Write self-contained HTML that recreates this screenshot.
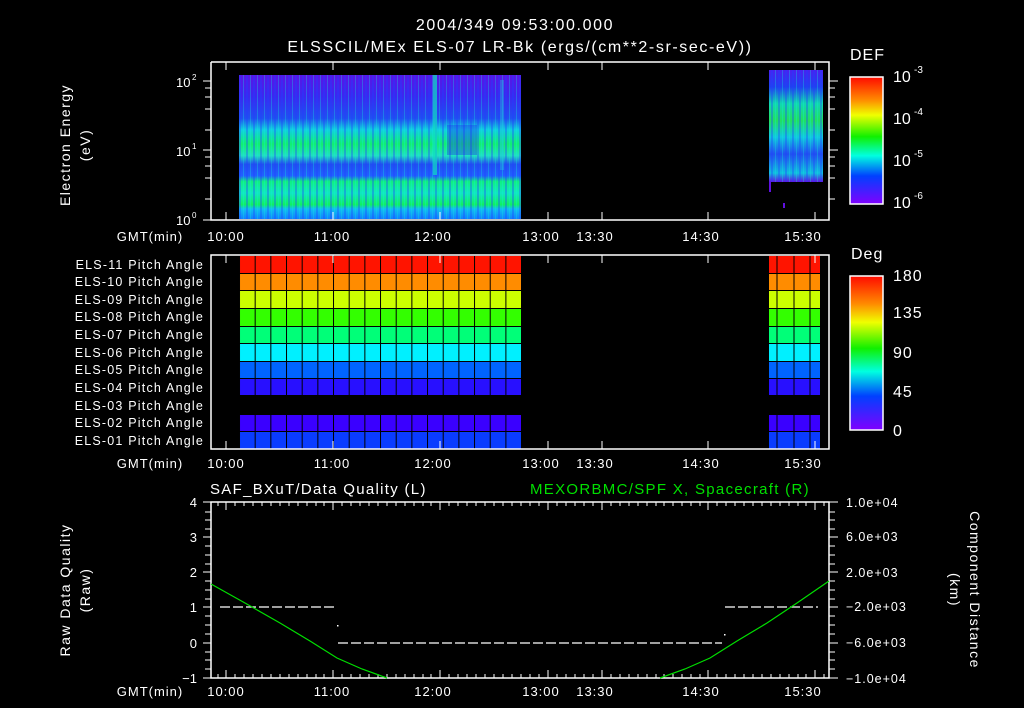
<!DOCTYPE html>
<html><head><style>
html,body{margin:0;padding:0;background:#000;width:1024px;height:708px;overflow:hidden}
svg{display:block}
text{font-family:"Liberation Sans",sans-serif;fill:#fff}
</style></head><body>
<svg width="1024" height="708" viewBox="0 0 1024 708">
<defs>
<linearGradient id="rb" x1="0" y1="0" x2="0" y2="1">
<stop offset="0" stop-color="#ff0a00"/>
<stop offset="0.18" stop-color="#ff8a00"/>
<stop offset="0.3" stop-color="#f0ff00"/>
<stop offset="0.47" stop-color="#10f000"/>
<stop offset="0.62" stop-color="#00ffe0"/>
<stop offset="0.78" stop-color="#0040ff"/>
<stop offset="1" stop-color="#8000ff"/>
</linearGradient>
<linearGradient id="sp" x1="0" y1="0" x2="0" y2="1">
<stop offset="0" stop-color="#5a14e6"/>
<stop offset="0.15" stop-color="#3a28f0"/>
<stop offset="0.3" stop-color="#2050f0"/>
<stop offset="0.38" stop-color="#10d0e0"/>
<stop offset="0.48" stop-color="#10f070"/>
<stop offset="0.56" stop-color="#20e0c0"/>
<stop offset="0.62" stop-color="#2050f0"/>
<stop offset="0.7" stop-color="#2060ff"/>
<stop offset="0.74" stop-color="#10f080"/>
<stop offset="0.82" stop-color="#10e8c0"/>
<stop offset="0.9" stop-color="#10f060"/>
<stop offset="0.93" stop-color="#10c0f0"/>
<stop offset="1" stop-color="#1080ff"/>
</linearGradient>
<linearGradient id="sp2" x1="0" y1="0" x2="0" y2="1">
<stop offset="0" stop-color="#4a20f0"/>
<stop offset="0.15" stop-color="#2040f0"/>
<stop offset="0.3" stop-color="#10d8b0"/>
<stop offset="0.45" stop-color="#20e060"/>
<stop offset="0.6" stop-color="#10c8e0"/>
<stop offset="0.75" stop-color="#2050f0"/>
<stop offset="0.92" stop-color="#10c0e0"/>
<stop offset="1" stop-color="#6010e0"/>
</linearGradient>
<pattern id="cols" x="239" y="0" width="15.67" height="10" patternUnits="userSpaceOnUse">
<rect x="0" y="0" width="1" height="10" fill="#000"/>
</pattern>
<pattern id="streak" x="239" y="0" width="7" height="10" patternUnits="userSpaceOnUse">
<rect x="0" y="0" width="2" height="10" fill="#2040ff" opacity="0.35"/>
<rect x="4" y="0" width="1" height="10" fill="#10f0e0" opacity="0.3"/>
</pattern>
</defs>

<g letter-spacing="1.6">
<text x="515" y="30" font-size="16" text-anchor="middle">2004/349 09:53:00.000</text>
<text x="520" y="52" font-size="16" text-anchor="middle">ELSSCIL/MEx ELS-07 LR-Bk  (ergs/(cm**2-sr-sec-eV))</text>
</g>

<!-- top panel -->
<rect x="239" y="75" width="282" height="144" fill="url(#sp)"/>
<rect x="239" y="75" width="282" height="144" fill="url(#streak)"/>
<rect x="433" y="75" width="4" height="100" fill="#10e0c0" opacity="0.7"/>
<rect x="500" y="80" width="4" height="90" fill="#20c0e0" opacity="0.4"/>
<rect x="447" y="125" width="30" height="30" fill="#2020f0" opacity="0.35"/>
<rect x="769" y="70" width="54" height="112" fill="url(#sp2)"/>
<rect x="769" y="70" width="54" height="112" fill="url(#streak)"/>
<rect x="769" y="182" width="2" height="10" fill="#6010e0"/>
<rect x="783" y="203" width="2" height="5" fill="#6010e0"/>
<g stroke="#fff" stroke-width="1.5" fill="none">
<path d="M211 62V220H829V62H211"/>
</g>
<g stroke="#fff" stroke-width="1">
<path d="M203 81H211M205 88H211M205 97H211M205 109H211M205 130H211M203 150H211M205 157H211M205 166H211M205 178H211M205 199H211M203 220H211"/>
<path d="M829 81H838M829 88H835M829 97H835M829 109H835M829 130H835M829 150H838M829 157H835M829 166H835M829 178H835M829 199H835"/>
<path d="M226 62v8M333 62v8M440 62v8M548 62v8M602 62v8M708 62v8M815 62v8M226 220v-8M333 220v-8M440 220v-8M548 220v-8M602 220v-8M708 220v-8M815 220v-8"/>
</g>
<text x="176" y="87" font-size="13">10</text><text x="192" y="80" font-size="8">2</text>
<text x="176" y="156" font-size="13">10</text><text x="192" y="149" font-size="8">1</text>
<text x="176" y="225" font-size="13">10</text><text x="192" y="218" font-size="8">0</text>
<g letter-spacing="1.5">
<text transform="translate(70,145) rotate(-90)" font-size="14" text-anchor="middle">Electron Energy</text>
<text transform="translate(90,145) rotate(-90)" font-size="14" text-anchor="middle">(eV)</text>
</g>

<!-- colorbar DEF -->
<text x="850" y="60" font-size="16" letter-spacing="1">DEF</text>
<rect x="850" y="77" width="33" height="127" fill="url(#rb)" stroke="#fff" stroke-width="1.5"/>
<text x="893" y="82" font-size="16">10</text><text x="914" y="73" font-size="10">-3</text>
<text x="893" y="124" font-size="16">10</text><text x="914" y="115" font-size="10">-4</text>
<text x="893" y="166" font-size="16">10</text><text x="914" y="157" font-size="10">-5</text>
<text x="893" y="208" font-size="16">10</text><text x="914" y="199" font-size="10">-6</text>

<!-- time labels -->
<g font-size="13" text-anchor="middle" letter-spacing="1">
<text x="150" y="241">GMT(min)</text>
<text x="226" y="241">10:00</text><text x="332" y="241">11:00</text><text x="433" y="241">12:00</text><text x="541" y="241">13:00</text><text x="595" y="241">13:30</text><text x="701" y="241">14:30</text><text x="803" y="241">15:30</text>
<text x="150" y="468">GMT(min)</text>
<text x="226" y="468">10:00</text><text x="332" y="468">11:00</text><text x="433" y="468">12:00</text><text x="541" y="468">13:00</text><text x="595" y="468">13:30</text><text x="701" y="468">14:30</text><text x="803" y="468">15:30</text>
<text x="150" y="696">GMT(min)</text>
<text x="226" y="696">10:00</text><text x="332" y="696">11:00</text><text x="433" y="696">12:00</text><text x="541" y="696">13:00</text><text x="595" y="696">13:30</text><text x="701" y="696">14:30</text><text x="803" y="696">15:30</text>
</g>

<!-- middle panel -->
<g>
<rect x="239" y="256" width="282" height="17" fill="#ff1400"/>
<rect x="239" y="274" width="282" height="16" fill="#ff8c00"/>
<rect x="239" y="291" width="282" height="17" fill="#ccff00"/>
<rect x="239" y="309" width="282" height="17" fill="#33ff00"/>
<rect x="239" y="327" width="282" height="16" fill="#00ff78"/>
<rect x="239" y="344" width="282" height="17" fill="#00f0ff"/>
<rect x="239" y="362" width="282" height="16" fill="#0064ff"/>
<rect x="239" y="379" width="282" height="16" fill="#2810ff"/>
<rect x="239" y="415" width="282" height="16" fill="#3a00ff"/>
<rect x="239" y="432" width="282" height="17" fill="#0a3cff"/>
<rect x="239" y="256" width="282" height="193" fill="url(#cols)"/>
</g>
<g>
<rect x="769" y="256" width="51" height="17" fill="#ff1400"/>
<rect x="769" y="274" width="51" height="16" fill="#ff8c00"/>
<rect x="769" y="291" width="51" height="17" fill="#ccff00"/>
<rect x="769" y="309" width="51" height="17" fill="#33ff00"/>
<rect x="769" y="327" width="51" height="16" fill="#00ff78"/>
<rect x="769" y="344" width="51" height="17" fill="#00f0ff"/>
<rect x="769" y="362" width="51" height="16" fill="#0064ff"/>
<rect x="769" y="379" width="51" height="16" fill="#2810ff"/>
<rect x="769" y="415" width="51" height="16" fill="#3a00ff"/>
<rect x="769" y="432" width="51" height="17" fill="#0a3cff"/>
<path d="M777 256V449M794 256V449M810 256V449" stroke="#000"/>
</g>
<rect x="211" y="255" width="618" height="194" fill="none" stroke="#fff" stroke-width="1.5"/>
<g stroke="#fff"><path d="M226 255v8M333 255v8M440 255v8M548 255v8M602 255v8M708 255v8M815 255v8M226 449v-8M333 449v-8M440 449v-8M548 449v-8M602 449v-8M708 449v-8M815 449v-8"/></g>
<g font-size="12.5" text-anchor="end" letter-spacing="1.2">
<text x="204" y="269">ELS-11 Pitch Angle</text>
<text x="204" y="286">ELS-10 Pitch Angle</text>
<text x="204" y="304">ELS-09 Pitch Angle</text>
<text x="204" y="321">ELS-08 Pitch Angle</text>
<text x="204" y="339">ELS-07 Pitch Angle</text>
<text x="204" y="357">ELS-06 Pitch Angle</text>
<text x="204" y="374">ELS-05 Pitch Angle</text>
<text x="204" y="392">ELS-04 Pitch Angle</text>
<text x="204" y="410">ELS-03 Pitch Angle</text>
<text x="204" y="427">ELS-02 Pitch Angle</text>
<text x="204" y="445">ELS-01 Pitch Angle</text>
</g>
<text x="851" y="259" font-size="16" letter-spacing="1">Deg</text>
<rect x="850" y="276" width="33" height="154" fill="url(#rb)" stroke="#fff" stroke-width="1.5"/>
<g font-size="16" letter-spacing="1">
<text x="893" y="281">180</text><text x="893" y="318">135</text><text x="893" y="358">90</text><text x="893" y="397">45</text><text x="893" y="436">0</text>
</g>

<!-- bottom panel -->
<text x="210" y="494" font-size="15" letter-spacing="1.3">SAF_BXuT/Data Quality (L)</text>
<text x="530" y="494" font-size="15" letter-spacing="1.3" style="fill:#00e000">MEXORBMC/SPF X, Spacecraft (R)</text>
<rect x="211" y="502" width="618" height="176" fill="none" stroke="#fff" stroke-width="1.5"/>
<g stroke="#fff" stroke-width="1">
<path d="M203 502H211M203 537H211M203 572H211M203 607H211M203 643H211M203 678H211M205 512H211M205 520H211M205 529H211M205 546H211M205 555H211M205 564H211M205 581H211M205 590H211M205 599H211M205 616H211M205 625H211M205 634H211M205 652H211M205 660H211M205 669H211"/>
<path d="M829 502H838M829 537H838M829 572H838M829 607H838M829 643H838M829 678H838M829 512H835M829 520H835M829 529H835M829 546H835M829 555H835M829 564H835M829 581H835M829 590H835M829 599H835M829 616H835M829 625H835M829 634H835M829 652H835M829 660H835M829 669H835"/>
<path d="M226 502v8M333 502v8M440 502v8M548 502v8M602 502v8M708 502v8M815 502v8M226 678v-8M333 678v-8M440 678v-8M548 678v-8M602 678v-8M708 678v-8M815 678v-8"/>
<path d="M218 502v4M235 502v4M244 502v4M253 502v4M262 502v4M271 502v4M280 502v4M289 502v4M298 502v4M307 502v4M316 502v4M324 502v4M342 502v4M351 502v4M360 502v4M369 502v4M378 502v4M387 502v4M396 502v4M405 502v4M414 502v4M423 502v4M431 502v4M449 502v4M458 502v4M467 502v4M476 502v4M485 502v4M494 502v4M503 502v4M512 502v4M521 502v4M530 502v4M539 502v4M557 502v4M566 502v4M575 502v4M584 502v4M593 502v4M611 502v4M620 502v4M629 502v4M638 502v4M647 502v4M656 502v4M664 502v4M673 502v4M682 502v4M691 502v4M700 502v4M717 502v4M726 502v4M735 502v4M744 502v4M753 502v4M762 502v4M771 502v4M780 502v4M789 502v4M798 502v4M806 502v4M824 502v4"/>
<path d="M218 678v-4M235 678v-4M244 678v-4M253 678v-4M262 678v-4M271 678v-4M280 678v-4M289 678v-4M298 678v-4M307 678v-4M316 678v-4M324 678v-4M342 678v-4M351 678v-4M360 678v-4M369 678v-4M378 678v-4M387 678v-4M396 678v-4M405 678v-4M414 678v-4M423 678v-4M431 678v-4M449 678v-4M458 678v-4M467 678v-4M476 678v-4M485 678v-4M494 678v-4M503 678v-4M512 678v-4M521 678v-4M530 678v-4M539 678v-4M557 678v-4M566 678v-4M575 678v-4M584 678v-4M593 678v-4M611 678v-4M620 678v-4M629 678v-4M638 678v-4M647 678v-4M656 678v-4M664 678v-4M673 678v-4M682 678v-4M691 678v-4M700 678v-4M717 678v-4M726 678v-4M735 678v-4M744 678v-4M753 678v-4M762 678v-4M771 678v-4M780 678v-4M789 678v-4M798 678v-4M806 678v-4M824 678v-4"/>
</g>
<g font-size="13" text-anchor="end">
<text x="197" y="507">4</text><text x="197" y="542">3</text><text x="197" y="577">2</text><text x="197" y="612">1</text><text x="197" y="648">0</text><text x="197" y="683">−1</text>
</g>
<g font-size="12.5" letter-spacing="1">
<text x="846" y="507">1.0e+04</text><text x="846" y="541">6.0e+03</text><text x="846" y="577">2.0e+03</text><text x="846" y="611">−2.0e+03</text><text x="846" y="647">−6.0e+03</text><text x="846" y="683">−1.0e+04</text>
</g>
<g letter-spacing="1.5">
<text transform="translate(70,590) rotate(-90)" font-size="14" text-anchor="middle">Raw Data Quality</text>
<text transform="translate(90,590) rotate(-90)" font-size="14" text-anchor="middle">(Raw)</text>
<text transform="translate(970,590) rotate(90)" font-size="14" text-anchor="middle">Component Distance</text>
<text transform="translate(950,590) rotate(90)" font-size="14" text-anchor="middle">(km)</text>
</g>
<g stroke="#fff" stroke-width="1.2" stroke-dasharray="10,3">
<path d="M220 607H337"/><path d="M338 643H722"/><path d="M725 607H818"/>
</g>
<rect x="337" y="625" width="1.5" height="1.5" fill="#fff"/>
<rect x="724" y="634" width="1.5" height="1.5" fill="#fff"/>
<polyline points="211,584 245,603 280,623 310,641 337,658 362,669 387,678" stroke="#00e000" fill="none" stroke-width="1.2"/>
<polyline points="660,678 685,669 710,658 737,641 767,623 797,603 829,581" stroke="#00e000" fill="none" stroke-width="1.2"/>
</svg>
</body></html>
